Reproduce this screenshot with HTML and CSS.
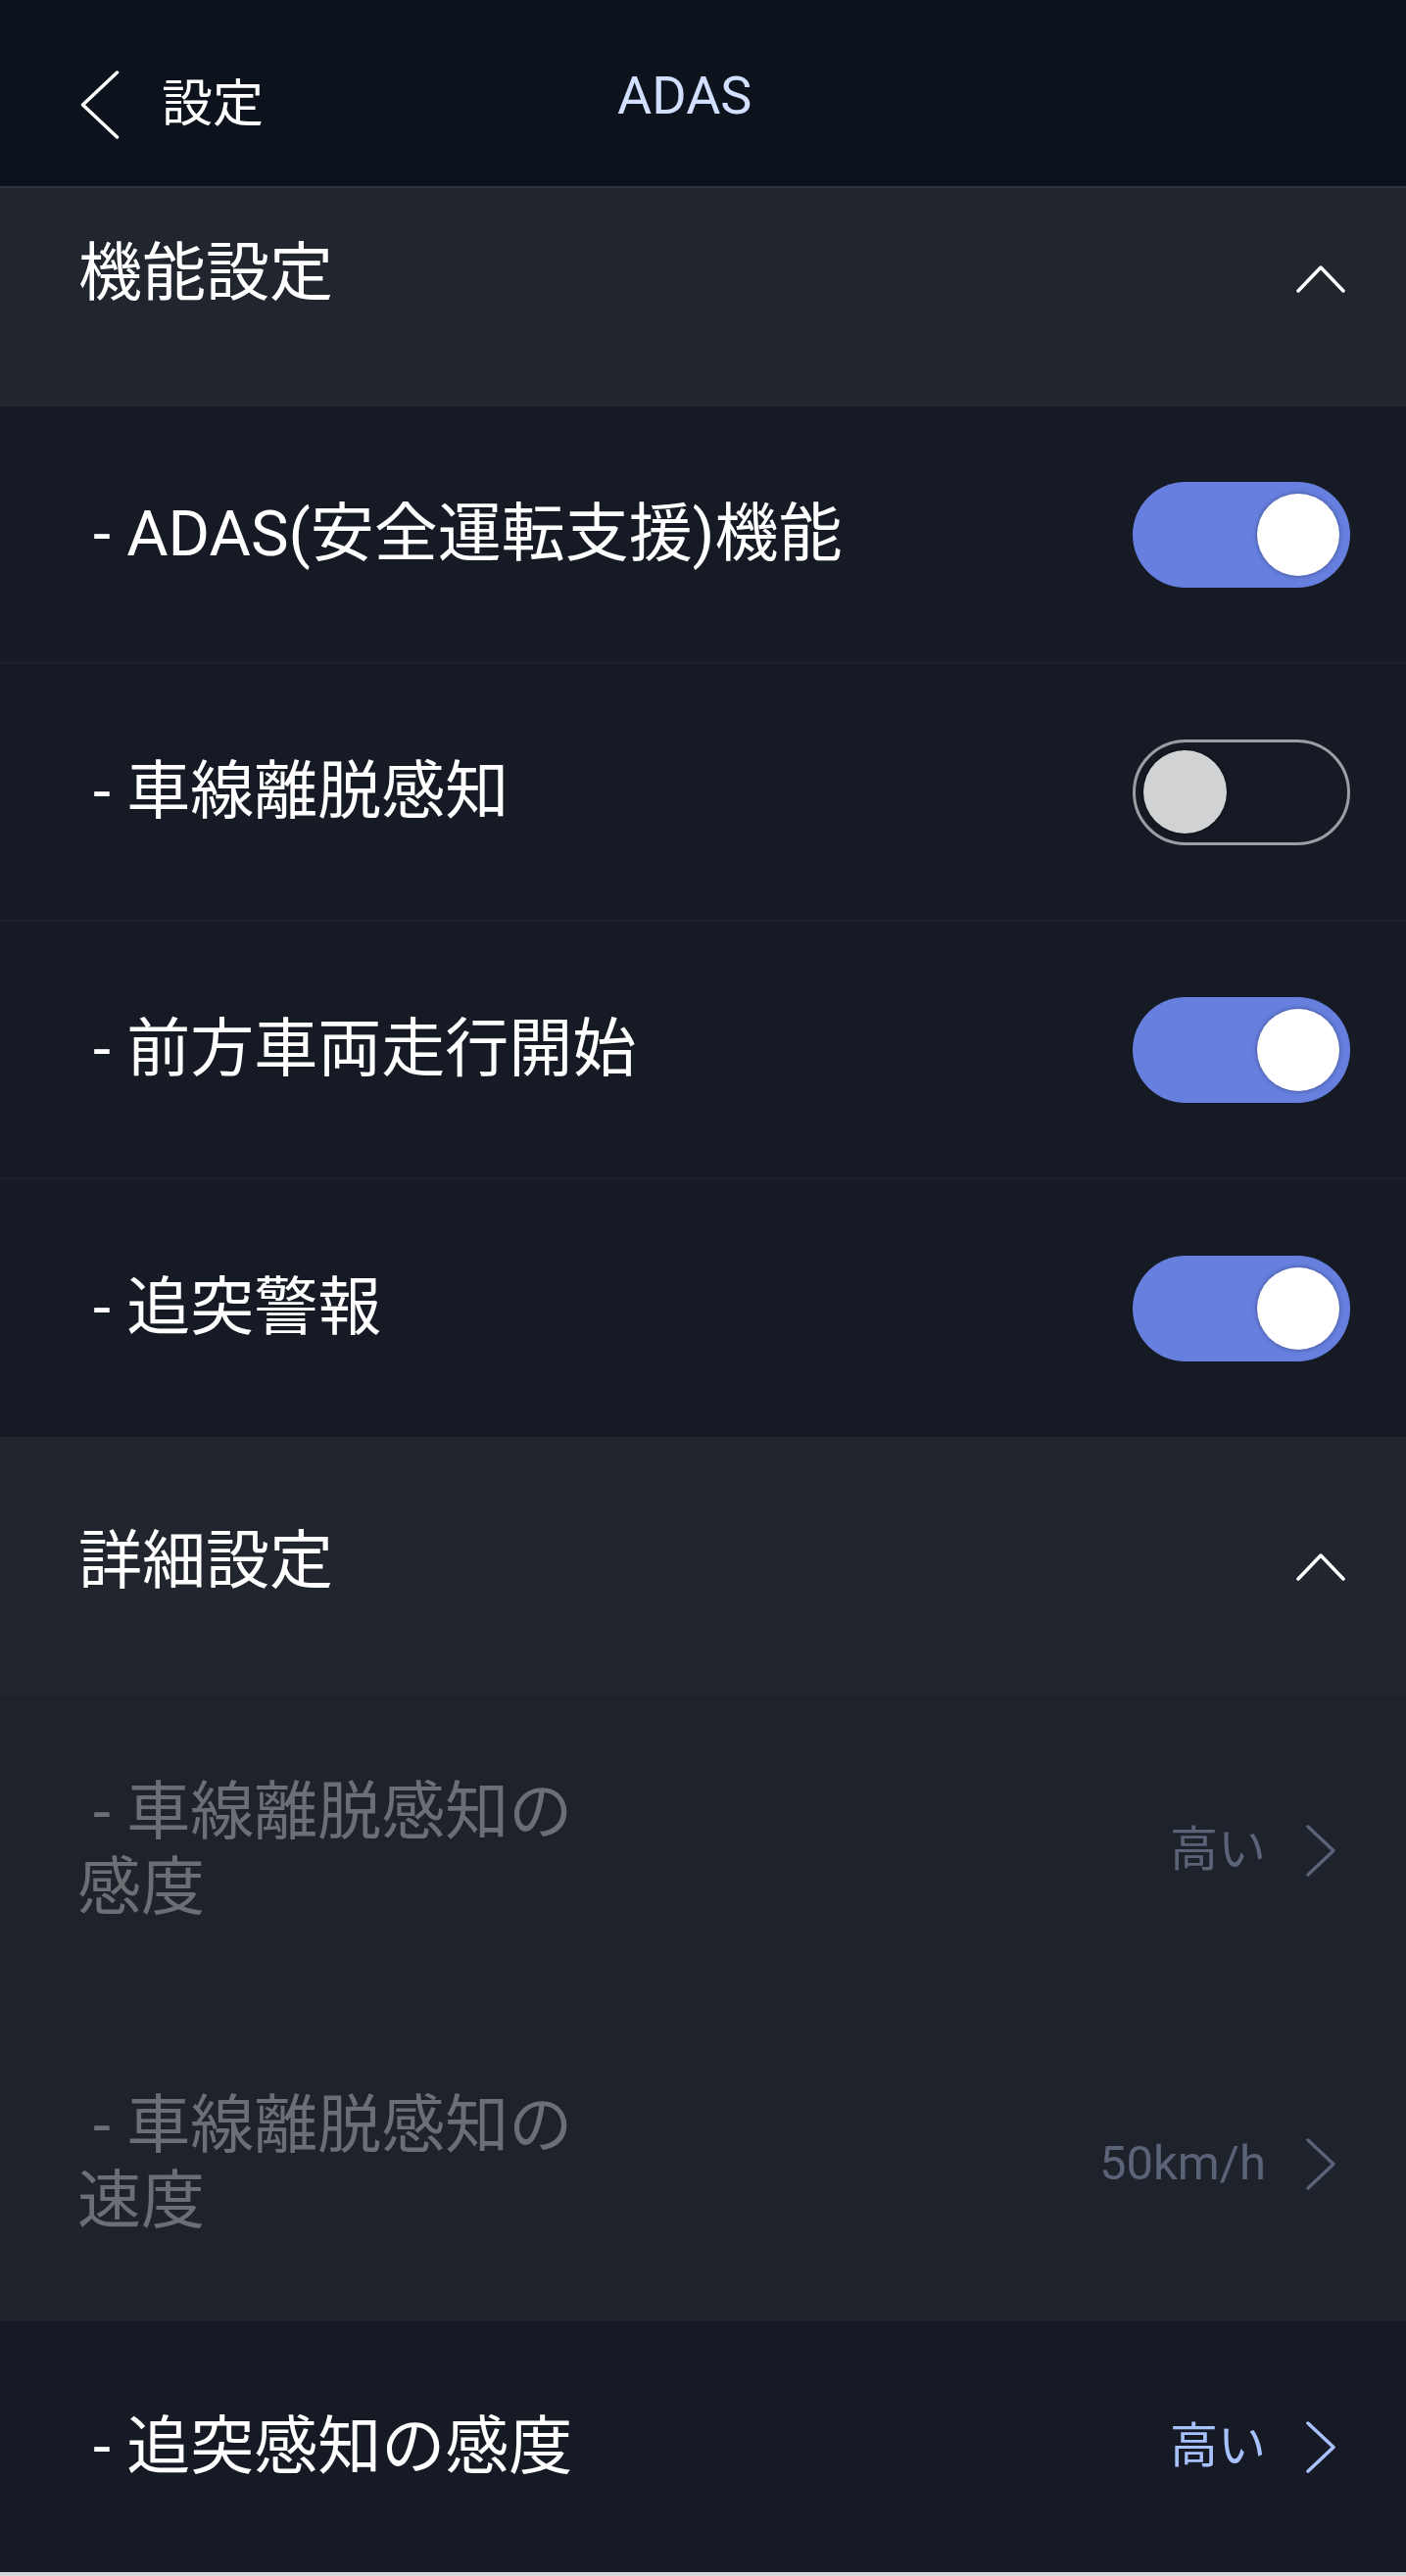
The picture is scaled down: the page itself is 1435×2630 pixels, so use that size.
FILE: index.html
```html
<!DOCTYPE html>
<html lang="ja">
<head>
<meta charset="utf-8">
<title>ADAS</title>
<link rel="stylesheet" href="styles.css">
</head>
<body>
<div class="app">
  <header class="topbar">
    <svg class="back-icon" width="40" height="70" viewBox="0 0 40 70" aria-hidden="true">
      <polyline points="37.5,2 2.5,35 37.5,68" />
    </svg>
    <span class="back-label">設定</span>
    <h1 class="title">ADAS</h1>
  </header>

  <main class="content">
    <div class="scroll">
      <section class="group">
        <div class="group-head">
          <h2 class="group-title">機能設定</h2>
          <svg class="chev-up" width="50" height="28" viewBox="0 0 50 28" aria-hidden="true">
            <polyline points="2,26 25,2 48,26" />
          </svg>
        </div>
        <div class="row">
          <span class="label">&nbsp;- ADAS(安全運転支援)機能</span>
          <span class="switch on"><span class="knob"></span></span>
        </div>
        <div class="row">
          <span class="label">&nbsp;- 車線離脱感知</span>
          <span class="switch off"><span class="knob"></span></span>
        </div>
        <div class="row">
          <span class="label">&nbsp;- 前方車両走行開始</span>
          <span class="switch on"><span class="knob"></span></span>
        </div>
        <div class="row">
          <span class="label">&nbsp;- 追突警報</span>
          <span class="switch on"><span class="knob"></span></span>
        </div>
      </section>

      <section class="group">
        <div class="group-head">
          <h2 class="group-title">詳細設定</h2>
          <svg class="chev-up" width="50" height="28" viewBox="0 0 50 28" aria-hidden="true">
            <polyline points="2,26 25,2 48,26" />
          </svg>
        </div>
        <div class="detail-row disabled">
          <span class="label detail-label">&nbsp;- 車線離脱感知の感度</span>
          <span class="value">高い</span>
          <svg class="chev-right" width="30" height="53" viewBox="0 0 30 53" aria-hidden="true">
            <polyline points="2,2 28,26.5 2,51" />
          </svg>
        </div>
        <div class="detail-row disabled">
          <span class="label detail-label">&nbsp;- 車線離脱感知の速度</span>
          <span class="value">50km/h</span>
          <svg class="chev-right" width="30" height="53" viewBox="0 0 30 53" aria-hidden="true">
            <polyline points="2,2 28,26.5 2,51" />
          </svg>
        </div>
        <div class="detail-row active">
          <span class="label detail-label">&nbsp;- 追突感知の感度</span>
          <span class="value">高い</span>
          <svg class="chev-right" width="30" height="53" viewBox="0 0 30 53" aria-hidden="true">
            <polyline points="2,2 28,26.5 2,51" />
          </svg>
        </div>
      </section>
    </div>
  </main>

  <div class="home-strip"></div>
</div>
</body>
</html>
```

FILE: styles.css
```css
* {
  box-sizing: border-box;
  margin: 0;
  padding: 0;
}

html, body {
  background: #151a24;
}

body {
  width: 1435px;
  font-family: Roboto, "Noto Sans CJK JP", sans-serif;
  color: #ffffff;
}

.app {
  display: flex;
  flex-direction: column;
  height: 2630px;
  overflow: hidden;
}

/* ---------- top bar ---------- */
.topbar {
  flex: none;
  height: 192px;
  background: #0d131d;
  border-bottom: 2px solid #2f333b;
  display: flex;
  align-items: center;
  padding: 24px 0 0 82px;
}

.back-icon polyline,
.chev-up polyline,
.chev-right polyline {
  fill: none;
  stroke: currentColor;
  stroke-width: 3.5;
  stroke-linecap: round;
  stroke-linejoin: round;
}

.back-icon {
  color: #ffffff;
  flex: none;
}

.back-label {
  margin-left: 43px;
  font-size: 52px;
  line-height: 1.3;
  color: #ffffff;
}

.title {
  margin-left: 361px;
  margin-bottom: 17px;
  font-size: 54px;
  font-weight: 400;
  line-height: 1.3;
  color: #d3dfff;
}

/* ---------- content ---------- */
.content {
  flex: 1;
  overflow: hidden;
}

.scroll {
  margin-top: -40px;
}

.group-head {
  height: 263px;
  background: #21252e;
  display: flex;
  align-items: center;
  justify-content: space-between;
  padding: 0 62px 9px 80px;
}

.group-title {
  font-size: 65px;
  font-weight: 400;
  line-height: 1.4;
  color: #ffffff;
}

.chev-up {
  color: #ffffff;
  margin-top: 12px;
  flex: none;
}

.row {
  height: 263px;
  display: flex;
  align-items: center;
  padding: 0 57px 0 79px;
  background: #151a24;
  border-bottom: 2px solid #1c2029;
}

.row:last-child {
  border-bottom: none;
}

.label {
  flex: 1;
  font-size: 65px;
  line-height: 77px;
  color: #ffffff;
}

/* ---------- switches ---------- */
.switch {
  flex: none;
  width: 222px;
  height: 108px;
  border-radius: 54px;
  display: flex;
  align-items: center;
}

.switch.on {
  background: #6780e0;
  justify-content: flex-end;
  padding: 0 11px;
}

.switch.off {
  border: 3px solid #9c9ea3;
  padding: 0 8px;
}

.knob {
  width: 84px;
  height: 84px;
  border-radius: 50%;
  background: #ffffff;
  box-shadow: 0 0 5px rgba(0, 0, 0, 0.4);
}

.switch.off .knob {
  width: 85px;
  height: 85px;
  background: #d1d2d4;
  box-shadow: 0 0 4px rgba(0, 0, 0, 0.45);
}

/* ---------- detail rows ---------- */
.detail-row {
  height: 320px;
  display: flex;
  align-items: center;
  padding: 0 72px 0 79px;
  background: #1e222b;
  border-bottom: 2px solid #1f232c;
}

.detail-label {
  flex: none;
  width: 545px;
}

.value {
  margin-left: auto;
  margin-right: 41px;
  font-size: 49px;
  line-height: 1.3;
}

.chev-right {
  flex: none;
}

.detail-row.disabled .label {
  color: #6b6e73;
}

.detail-row.disabled .value,
.detail-row.disabled .chev-right {
  color: #5a6377;
}

.detail-row.active {
  height: 256px;
  background: #151a24;
  border-bottom: none;
}

.detail-row.active .label {
  color: #ffffff;
}

.detail-row.active .value,
.detail-row.active .chev-right {
  color: #a8c2ff;
}

.home-strip {
  flex: none;
  height: 4px;
  background: #d7d8da;
}
```
